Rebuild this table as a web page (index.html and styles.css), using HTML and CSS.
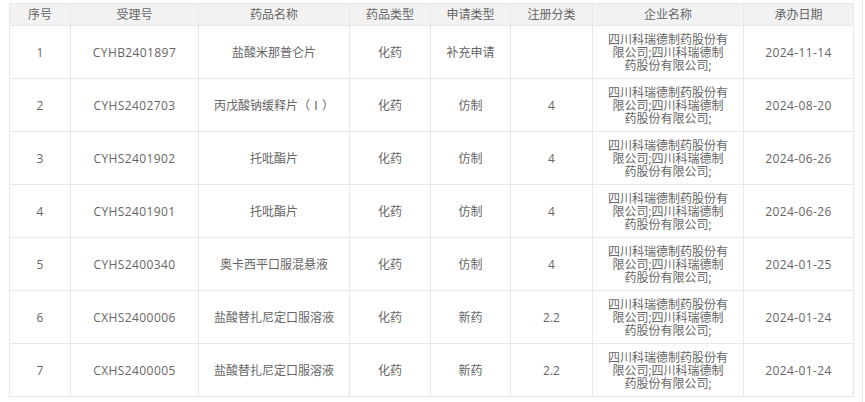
FILE: index.html
```html
<!DOCTYPE html>
<html lang="zh">
<head>
<meta charset="utf-8">
<title>药品注册</title>
<link rel="stylesheet" href="styles.css">
</head>
<body>
<div class="page">
  <table class="grid">
    <colgroup>
      <col class="c1"><col class="c2"><col class="c3"><col class="c4"><col class="c5"><col class="c6"><col class="c7"><col class="c8">
    </colgroup>
    <thead>
      <tr>
        <th>序号</th><th>受理号</th><th>药品名称</th><th>药品类型</th><th>申请类型</th><th>注册分类</th><th>企业名称</th><th>承办日期</th>
      </tr>
    </thead>
    <tbody>
      <tr>
        <td>1</td><td class="num">CYHB2401897</td><td>盐酸米那普仑片</td><td>化药</td><td>补充申请</td><td></td>
        <td><div class="co">四川科瑞德制药股份有限公司;四川科瑞德制药股份有限公司;</div></td><td class="num">2024-11-14</td>
      </tr>
      <tr>
        <td>2</td><td class="num">CYHS2402703</td><td>丙戊酸钠缓释片（Ⅰ）</td><td>化药</td><td>仿制</td><td>4</td>
        <td><div class="co">四川科瑞德制药股份有限公司;四川科瑞德制药股份有限公司;</div></td><td class="num">2024-08-20</td>
      </tr>
      <tr>
        <td>3</td><td class="num">CYHS2401902</td><td>托吡酯片</td><td>化药</td><td>仿制</td><td>4</td>
        <td><div class="co">四川科瑞德制药股份有限公司;四川科瑞德制药股份有限公司;</div></td><td class="num">2024-06-26</td>
      </tr>
      <tr>
        <td>4</td><td class="num">CYHS2401901</td><td>托吡酯片</td><td>化药</td><td>仿制</td><td>4</td>
        <td><div class="co">四川科瑞德制药股份有限公司;四川科瑞德制药股份有限公司;</div></td><td class="num">2024-06-26</td>
      </tr>
      <tr>
        <td>5</td><td class="num">CYHS2400340</td><td>奥卡西平口服混悬液</td><td>化药</td><td>仿制</td><td>4</td>
        <td><div class="co">四川科瑞德制药股份有限公司;四川科瑞德制药股份有限公司;</div></td><td class="num">2024-01-25</td>
      </tr>
      <tr>
        <td>6</td><td class="num">CXHS2400006</td><td>盐酸替扎尼定口服溶液</td><td>化药</td><td>新药</td><td>2.2</td>
        <td><div class="co">四川科瑞德制药股份有限公司;四川科瑞德制药股份有限公司;</div></td><td class="num">2024-01-24</td>
      </tr>
      <tr>
        <td>7</td><td class="num">CXHS2400005</td><td>盐酸替扎尼定口服溶液</td><td>化药</td><td>新药</td><td>2.2</td>
        <td><div class="co">四川科瑞德制药股份有限公司;四川科瑞德制药股份有限公司;</div></td><td class="num">2024-01-24</td>
      </tr>
    </tbody>
  </table>
</div>
</body>
</html>
```

FILE: styles.css
```css
html, body {
  margin: 0;
  padding: 0;
  background: #ffffff;
}
body {
  font-family: "Open Sans", "Noto Sans CJK SC", sans-serif;
  font-size: 12px;
  color: #666666;
}
.page {
  width: 844px;
  padding: 3px 9px 6px 9px;
  border-right: 1px solid #e4e9ef;
  min-height: 393px;
}
.grid {
  width: 844px;
  table-layout: fixed;
  border-collapse: collapse;
}
.c1 { width: 61px; }
.c2 { width: 128px; }
.c3 { width: 151px; }
.c4 { width: 81px; }
.c5 { width: 80px; }
.c6 { width: 82px; }
.c7 { width: 151px; }
.c8 { width: 110px; }
.grid th,
.grid td {
  border: 1px solid #e8e8e8;
  text-align: center;
  vertical-align: middle;
  padding: 0;
  line-height: 13px;
}
.grid th {
  background: #f2f2f2;
  font-weight: normal;
  height: 21px;
  color: #666666;
}
.grid td {
  height: 52px;
}
.num {
  letter-spacing: 0.4px;
}
.co {
  width: 121px;
  margin: 0 auto;
}
```
